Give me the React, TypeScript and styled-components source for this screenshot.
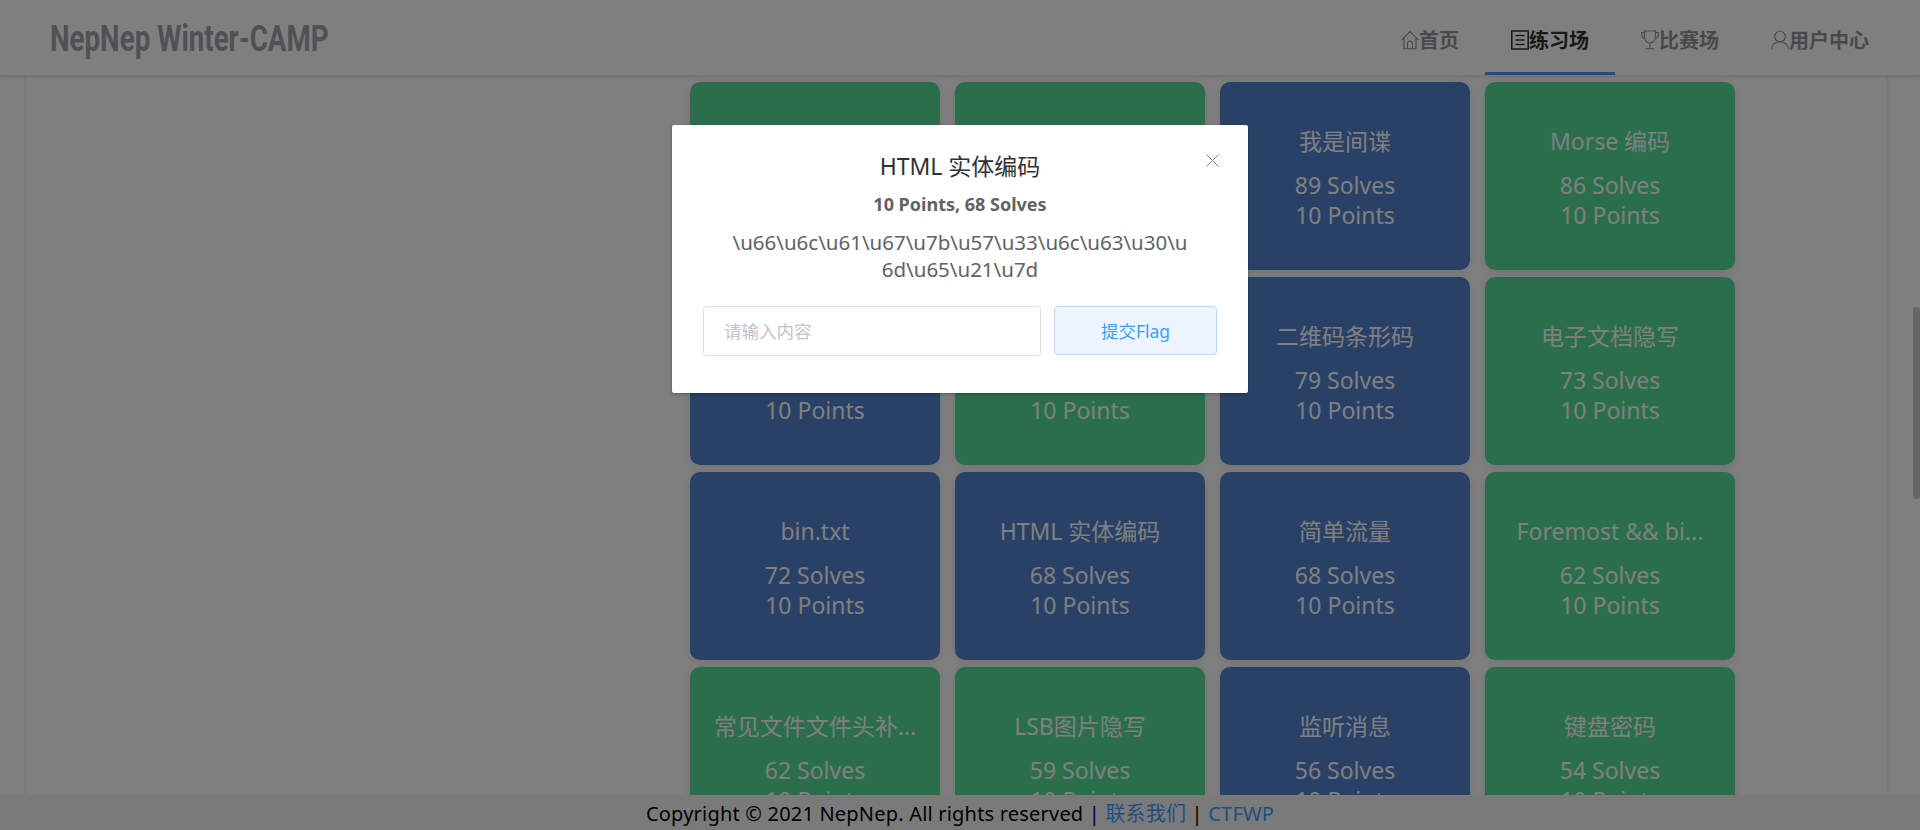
import React from "react";
import styled, { createGlobalStyle } from "styled-components";

const Global = createGlobalStyle`
  html, body { margin: 0; padding: 0; height: 100%; overflow: hidden; background: #fff; }
  * { box-sizing: border-box; }
  body { font-family: "Noto Sans", "Open Sans", "Noto Sans CJK SC", sans-serif; }
`;

const Shell = styled.div`
  position: relative;
  height: 830px;
  display: flex;
  flex-direction: column;
  overflow: hidden;
  background: #fff;
`;
const Header = styled.header`
  position: relative;
  z-index: 2;
  flex: 0 0 76px;
  display: flex;
  align-items: flex-start;
  justify-content: space-between;
  padding: 0 25px 0 50px;
  background: #fff;
  border-bottom: 1px solid #e6e6e6;
  box-shadow: 0 1px 4px rgba(0, 0, 0, 0.12);
`;
const Logo = styled.div`
  height: 75px;
  padding-top: 4px;
  font-family: "Roboto", sans-serif;
  font-size: 36px;
  font-weight: 700;
  line-height: 71px;
  color: #a0a3aa;
  white-space: nowrap;
  transform: scaleX(0.77);
  transform-origin: left center;
`;
const Nav = styled.nav`
  display: flex;
`;
const NavItem = styled.a<{ $active?: boolean }>`
  display: flex;
  align-items: center;
  height: 75px;
  padding: 7px 26px 0;
  font-size: 20px;
  font-weight: 700;
  color: ${(p) => (p.$active ? "#303133" : "#909399")};
  border-bottom: 3px solid ${(p) => (p.$active ? "#409eff" : "transparent")};
  svg {
    flex: none;
    width: 18px;
    height: 20px;
  }
`;
const Main = styled.main`
  position: relative;
  flex: 1;
  min-height: 0;
  overflow: hidden;
  padding-left: 26px;
`;
const Panel = styled.div`
  width: 1861px;
  height: 100%;
  display: flex;
  justify-content: flex-end;
  padding: 6px 152px 0 0;
  background: #fff;
  box-shadow: 0 0 4px rgba(0, 0, 0, 0.14);
`;
const Grid = styled.div`
  display: grid;
  grid-template-columns: repeat(4, 250px);
  grid-auto-rows: 188px;
  gap: 7px 15px;
`;
const Card = styled.div<{ $kind: "green" | "blue" }>`
  padding: 40px 20px 0;
  border-radius: 10px;
  background: ${(p) => (p.$kind === "green" ? "#54dc98" : "#5282cd")};
  color: #fff;
  text-align: center;
  font-size: 23px;
  line-height: 30px;
  box-shadow: 0 2px 12px rgba(0, 0, 0, 0.1);
`;
const CardTitle = styled.div`
  height: 38px;
  line-height: 38px;
  margin-bottom: 10px;
  white-space: nowrap;
`;
const Scroll = styled.div`
  position: absolute;
  top: 231px;
  right: 0;
  width: 7px;
  height: 192px;
  border-radius: 4px;
  background: #cdcdcd;
`;
const Footer = styled.footer`
  position: relative;
  z-index: 1;
  flex: 0 0 35px;
  min-height: 0;
  padding-top: 2px;
  background: #f4f4f4;
  color: #000;
  font-size: 20px;
  letter-spacing: 0.2px;
  line-height: 33px;
  text-align: center;
  white-space: nowrap;
  a { color: #409eff; text-decoration: none; }
`;
const Overlay = styled.div`
  position: absolute;
  inset: 0;
  z-index: 5;
  background: rgba(0, 0, 0, 0.5);
`;
const Dialog = styled.div`
  position: absolute;
  left: 672px;
  top: 125px;
  width: 576px;
  height: 268px;
  padding: 25px 31px 0;
  border-radius: 2px;
  background: #fff;
  box-shadow: 0 1px 3px rgba(0, 0, 0, 0.3);
  text-align: center;
`;
const Close = styled.button`
  position: absolute;
  top: 29px;
  right: 29px;
  width: 13px;
  height: 13px;
  padding: 0;
  border: 0;
  background: none;
  color: #80838a;
  svg { display: block; width: 13px; height: 13px; }
`;
const DialogTitle = styled.div`
  font-size: 23px;
  line-height: 32px;
  color: #303133;
`;
const Stats = styled.div`
  margin-top: 9px;
  font-size: 18px;
  font-weight: 700;
  line-height: 26px;
  color: #606266;
`;
const Body = styled.div`
  margin: 12px auto 0;
  width: 466px;
  font-size: 20.5px;
  line-height: 27px;
  color: #606266;
  word-break: break-all;
`;
const FormRow = styled.div`
  display: flex;
  justify-content: space-between;
  margin-top: 23px;
`;
const Input = styled.input`
  width: 338px;
  height: 50px;
  padding: 0 20px;
  border: 1px solid #dcdfe6;
  border-radius: 4px;
  font: inherit;
  font-size: 17.5px;
  color: #606266;
  outline: none;
  &::placeholder { color: #c0c4cc; }
`;
const Submit = styled.button`
  width: 163px;
  height: 49px;
  border: 1px solid #b3d8ff;
  border-radius: 4px;
  background: #ecf5ff;
  color: #409eff;
  font: inherit;
  font-size: 17.5px;
`;

const stroke = { fill: "none", stroke: "currentColor", strokeWidth: 1.1 };

const HomeIcon = () => (
  <svg viewBox="0 0 18 20" {...stroke}>
    <path d="M.6 10.200 9 1.500l8.400 8.700M3 8v10.700h12V8" />
    <path d="M6.500 18.700v-5.200a2.500 2.500 0 0 1 5 0v5.200" />
  </svg>
);
const NotebookIcon = () => (
  <svg viewBox="0 0 18 20" fill="none" stroke="currentColor" strokeWidth="1.6">
    <path d="M.8 1h16.400v18H.800zM4.500 5.500h9M4.500 10h9M4.500 14.500h9" />
  </svg>
);
const TrophyIcon = () => (
  <svg viewBox="0 0 18 20" {...stroke}>
    <path d="M3.500 1h11v5.500c0 3.500-2.300 6.500-5.500 6.500S3.500 10 3.500 6.500zM3.500 2.500H.7v2c0 2 1 3.500 3.500 4.300M14.500 2.500h2.800v2c0 2-1 3.500-3.500 4.300M9 13v5.500M4.500 18.800h9" />
  </svg>
);
const UserIcon = () => (
  <svg viewBox="0 0 18 20" {...stroke}>
    <circle cx="9" cy="6.500" r="5.300" />
    <path d="M.6 19.500C.6 15 4 11.800 9 11.800s8.400 3.200 8.400 7.700" />
  </svg>
);

type CardData = { title: string; solves: string; kind: "green" | "blue" };
const card = (title: string, n: number | null, kind: "green" | "blue"): CardData => ({
  title,
  solves: n === null ? "\u00a0" : `${n} Solves`,
  kind,
});
const cards: CardData[] = [
  card("\u00a0", null, "green"),
  card("\u00a0", null, "green"),
  card("我是间谍", 89, "blue"),
  card("Morse 编码", 86, "green"),
  card("\u00a0", null, "blue"),
  card("\u00a0", null, "green"),
  card("二维码条形码", 79, "blue"),
  card("电子文档隐写", 73, "green"),
  card("bin.txt", 72, "blue"),
  card("HTML 实体编码", 68, "blue"),
  card("简单流量", 68, "blue"),
  card("Foremost && bi...", 62, "green"),
  card("常见文件文件头补...", 62, "green"),
  card("LSB图片隐写", 59, "green"),
  card("监听消息", 56, "blue"),
  card("键盘密码", 54, "green"),
];

export default function App() {
  return (
    <>
      <Global />
      <Shell>
        <Header>
          <Logo>NepNep Winter-CAMP</Logo>
          <Nav>
            <NavItem><HomeIcon />首页</NavItem>
            <NavItem $active><NotebookIcon />练习场</NavItem>
            <NavItem><TrophyIcon />比赛场</NavItem>
            <NavItem><UserIcon />用户中心</NavItem>
          </Nav>
        </Header>
        <Main>
          <Panel>
            <Grid>
              {cards.map((c, i) => (
                <Card key={i} $kind={c.kind}>
                  <CardTitle>{c.title}</CardTitle>
                  <div>{c.solves}</div>
                  <div>10 Points</div>
                </Card>
              ))}
            </Grid>
          </Panel>
          <Scroll />
        </Main>
        <Footer>
          Copyright © 2021 NepNep. All rights reserved | <a>联系我们</a> | <a>CTFWP</a>
        </Footer>
        <Overlay>
          <Dialog>
            <Close aria-label="关闭">
              <svg viewBox="0 0 13 13" fill="none" stroke="currentColor" strokeWidth="1">
                <path d="M.5.5l12 12M12.500.5l-12 12" />
              </svg>
            </Close>
            <DialogTitle>HTML 实体编码</DialogTitle>
            <Stats>10 Points, 68 Solves</Stats>
            <Body>{"\\u66\\u6c\\u61\\u67\\u7b\\u57\\u33\\u6c\\u63\\u30\\u6d\\u65\\u21\\u7d"}</Body>
            <FormRow>
              <Input placeholder="请输入内容" />
              <Submit>提交Flag</Submit>
            </FormRow>
          </Dialog>
        </Overlay>
      </Shell>
    </>
  );
}
